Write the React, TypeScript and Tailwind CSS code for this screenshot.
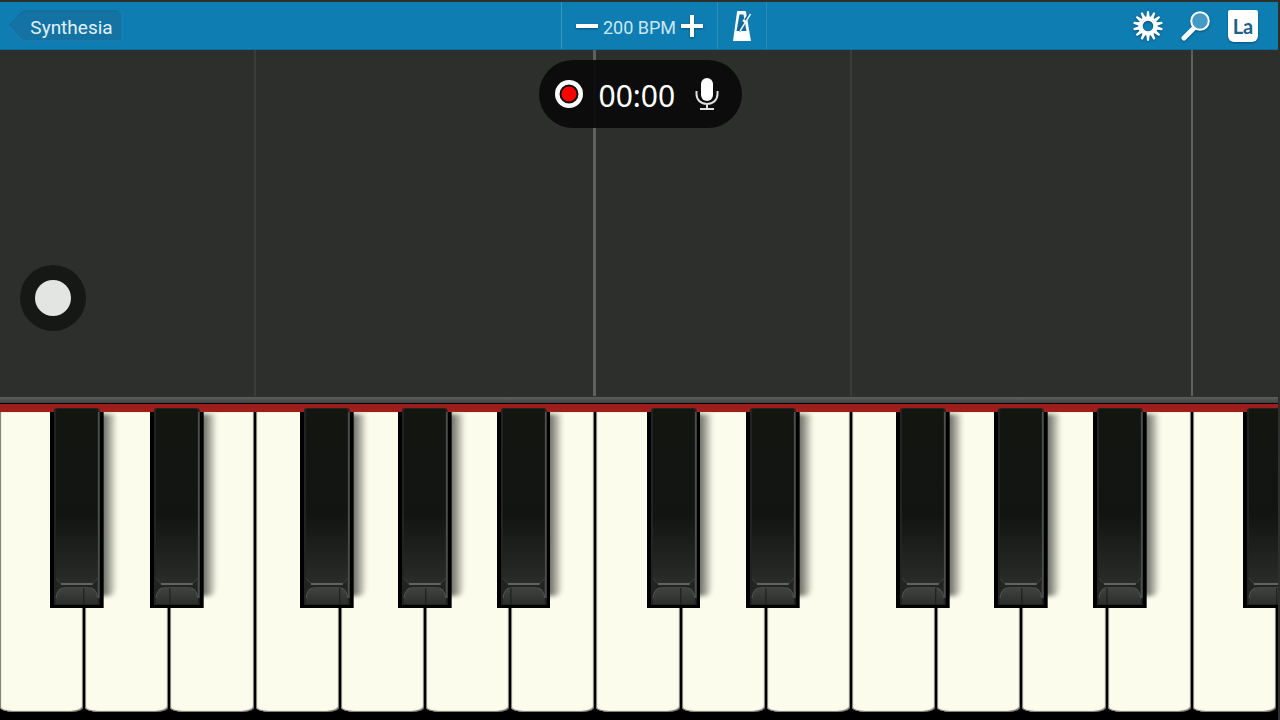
import { useState } from "react";

type Key = {
  note: string;
  sharp?: string;
  seam?: number;
};

const octave: Key[] = [
  { note: "C", sharp: "left-[59%]", seam: 34 },
  { note: "D", sharp: "left-[76%]", seam: 20 },
  { note: "E" },
  { note: "F", sharp: "left-[52%]", seam: 40 },
  { note: "G", sharp: "left-[67%]", seam: 28 },
  { note: "A", sharp: "left-[83%]", seam: 14 },
  { note: "B" },
];

const keys = [...octave, ...octave, octave[0]];

function SharpArt({ seam }: { seam?: number }) {
  return (
    <svg viewBox="0 0 54 200" preserveAspectRatio="none" className="relative block h-full w-full">
      <defs>
        <linearGradient id="top" x1="0" y1="0" x2="0" y2="1">
          <stop offset="0" stopColor="#131511" />
          <stop offset="0.6" stopColor="#121412" />
          <stop offset="1" stopColor="#2a2c2a" />
        </linearGradient>
        <linearGradient id="lip" x1="0" y1="0" x2="0" y2="1">
          <stop offset="0" stopColor="#424442" />
          <stop offset="1" stopColor="#2c2e2c" />
        </linearGradient>
      </defs>
      <rect x="0" y="4" width="54" height="196" fill="#000" />
      <path d="M4 197V3Q4 0 7 0H47Q50 0 50 3V197Z" fill="#222422" />
      <path d="M49 4V190" stroke="#4c4e4c" strokeWidth="2" />
      <path d="M6 3Q6 1 8 1H46Q48 1 48 3V170Q45 176 40 176H14Q9 176 6 170Z" fill="url(#top)" />
      <path d="M6 170Q9 176 14 176H40Q45 176 48 170" fill="none" stroke="#3c3e3c" />
      <path d="M11 176H43" stroke="#626462" strokeWidth="2" />
      <path d="M6 196V188Q8 179 16 179H38Q46 179 48 188V196Z" fill="url(#lip)" />
      <path d="M6 190Q7 182 12 180M42 180Q47 182 48 190" fill="none" stroke="#505250" />
      <path d={`M${seam} 180V197`} stroke="#181a18" />
    </svg>
  );
}

function Keyboard() {
  return (
    <div className="grid h-[300px] grid-cols-[repeat(15,minmax(0,1fr))] bg-black">
      {keys.map((key, i) => (
        <div key={i} className="relative">
          <button
            type="button"
            aria-label={key.note}
            className="block h-full w-full rounded-[0_0_14px_14px/0_0_5px_5px] border-r-2 border-black bg-[#fbfceb] shadow-[inset_1px_0_1px_#77786f,inset_-1px_-1px_1px_#77786f]"
          />
          {key.sharp && (
            <button
              type="button"
              aria-label={`${key.note} sharp`}
              className={`absolute -top-1 z-10 h-[200px] w-[63%] ${key.sharp}`}
            >
              <span className="absolute top-1.5 -right-3 bottom-3 w-6 rounded-br-lg bg-linear-to-r from-[#6f7068] from-50% to-[#6f7068]/10 blur-[2px]" />
              <SharpArt seam={key.seam} />
            </button>
          )}
        </div>
      ))}
    </div>
  );
}

function MetronomeIcon() {
  return (
    <svg viewBox="0 0 20 32" className="h-8 w-5" fill="none">
      <path d="M5 2Q5 1 6 1H13Q14 1 14 2L19 31H1Z" fill="#fff" />
      <path d="M7.500 4.500H11.500L14.500 21H4.500Z" fill="#0e6fa3" />
      <path d="M7 21L17 5" stroke="#0d5f8e" strokeWidth="3" />
      <path d="M8 21L18.500 4" stroke="#e8f3f8" strokeWidth="1.500" />
      <path d="M11 10L15 13" stroke="#fff" strokeWidth="2.500" />
    </svg>
  );
}

function GearIcon() {
  return (
    <svg viewBox="-16 -16 32 32" className="size-8">
      {Array.from({ length: 14 }, (_, i) => (
        <path
          key={i}
          d="M-1.700 -9L-1 -14.800H1L1.700 -9Z"
          fill="#fff"
          transform={`rotate(${(i * 360) / 14})`}
        />
      ))}
      <circle r="7.500" fill="none" stroke="#fff" strokeWidth="4.400" />
    </svg>
  );
}

function SearchIcon() {
  return (
    <svg viewBox="0 0 32 32" className="size-8">
      <path d="M4 28L14 18" stroke="#fff" strokeWidth="5" strokeLinecap="round" />
      <circle cx="20" cy="11" r="8.800" fill="#459bc6" stroke="#fff" strokeWidth="2" />
    </svg>
  );
}

function MicIcon() {
  return (
    <svg viewBox="0 0 24 34" className="h-[34px] w-6" fill="none" stroke="#e0e0e0" strokeWidth="2">
      <rect x="6" y="1" width="12" height="23" rx="6" fill="#fff" stroke="none" />
      <path d="M1.500 14V17C1.500 23 6 27 12 27S22.500 23 22.500 17V14M12 27V32M5 32H19" />
    </svg>
  );
}

export default function App() {
  const [bpm, setBpm] = useState(200);

  return (
    <div className="flex h-screen flex-col overflow-hidden bg-[#2d2f2d] pt-0.5 font-['Roboto',sans-serif]">
      <header className="mr-0.5 grid h-12 shrink-0 grid-cols-[1fr_auto_1fr] items-stretch border-b border-[#0c6c9f] bg-[#0e7db1] text-white">
        <div className="flex items-center pl-2">
          <button type="button" className="relative h-8 w-[115px] text-[19px] text-[#e2f1f8]">
            <svg viewBox="0 0 115 32" className="absolute inset-0 h-full w-full">
              <path
                d="M1 16L13 3Q15 1 18 1H111Q114 1 114 4V28Q114 31 111 31H18Q15 31 13 29Z"
                fill="#1473a3"
                stroke="#1b82b3"
              />
              <path d="M1 16L13 3Q15 1 18 1H111" fill="none" stroke="#0d6594" />
            </svg>
            <span className="relative block pt-1 pl-3">Synthesia</span>
          </button>
        </div>

        <div className="flex w-[156px] items-center justify-center gap-1 border-l border-[#3596c1]">
          <button type="button" aria-label="Slower" onClick={() => setBpm(bpm - 1)}>
            <svg viewBox="0 0 24 24" className="size-6 drop-shadow-[0_1px_1px_#0a4f78]">
              <path d="M1 12H23" stroke="#fff" strokeWidth="4" />
            </svg>
          </button>
          <span className="pt-1 text-lg text-[#cbe6f3]">{bpm} BPM</span>
          <button type="button" aria-label="Faster" onClick={() => setBpm(bpm + 1)}>
            <svg viewBox="0 0 24 24" className="size-6 drop-shadow-[0_1px_1px_#0a4f78]">
              <path d="M1 12H23M12 1V23" stroke="#fff" strokeWidth="4" />
            </svg>
          </button>
        </div>

        <div className="flex justify-between">
          <button
            type="button"
            aria-label="Metronome"
            className="flex w-[50px] items-center justify-center border-x border-[#2b8dba]"
          >
            <MetronomeIcon />
          </button>
          <div className="flex items-center gap-4 pr-5">
            <button type="button" aria-label="Settings" className="drop-shadow-[0_1px_1px_#0a4f78]">
              <GearIcon />
            </button>
            <button type="button" aria-label="Search" className="drop-shadow-[0_1px_1px_#0a4f78]">
              <SearchIcon />
            </button>
            <button
              type="button"
              className="h-8 w-[30px] rounded-t-xs rounded-b-md bg-white text-xl leading-8 font-bold text-[#1f5f8b] shadow-[0_1px_2px_#0a4f78] font-['Lato',sans-serif]"
            >
              La
            </button>
          </div>
        </div>
      </header>

      <main className="relative min-h-0 flex-1">
        <div className="mr-0.5 grid h-full grid-cols-[repeat(15,minmax(0,1fr))] pb-px">
          <div className="col-span-3 border-r-2 border-[#3a3c3a]" />
          <div className="col-span-4 border-r-3 border-[#5f615f]" />
          <div className="col-span-3 border-r-2 border-[#3a3c3a]" />
          <div className="col-span-4 border-r-2 border-[#5f615f]" />
        </div>

        <div className="absolute inset-x-0 top-2.5 flex justify-center">
          <div className="flex h-[68px] w-[203px] items-center rounded-full bg-[#090b09]/95 pl-4 text-white">
            <button type="button" aria-label="Record">
              <svg viewBox="0 0 28 28" className="size-7">
                <circle cx="14" cy="14" r="14" fill="#fff" />
                <circle cx="14" cy="14" r="8.500" fill="#f00" stroke="#111" strokeWidth="2" />
              </svg>
            </button>
            <time className="ml-4 pt-1 text-3xl font-['Noto_Sans',sans-serif]">00:00</time>
            <button type="button" aria-label="Microphone" className="ml-5">
              <MicIcon />
            </button>
          </div>
        </div>

        <button
          type="button"
          aria-label="Menu"
          className="absolute top-[215px] left-5 flex size-[66px] items-center justify-center rounded-full bg-[#161816]"
        >
          <span className="size-9 rounded-full bg-[#e3e5e3]" />
        </button>
      </main>

      <section className="mr-0.5 shrink-0 overflow-hidden bg-black pb-2">
        <div className="h-[7px] border-b border-black bg-linear-to-b from-[#5c5e5c] to-[#434543]" />
        <div className="h-2 bg-[#9e1e1b]" />
        <Keyboard />
      </section>
    </div>
  );
}
